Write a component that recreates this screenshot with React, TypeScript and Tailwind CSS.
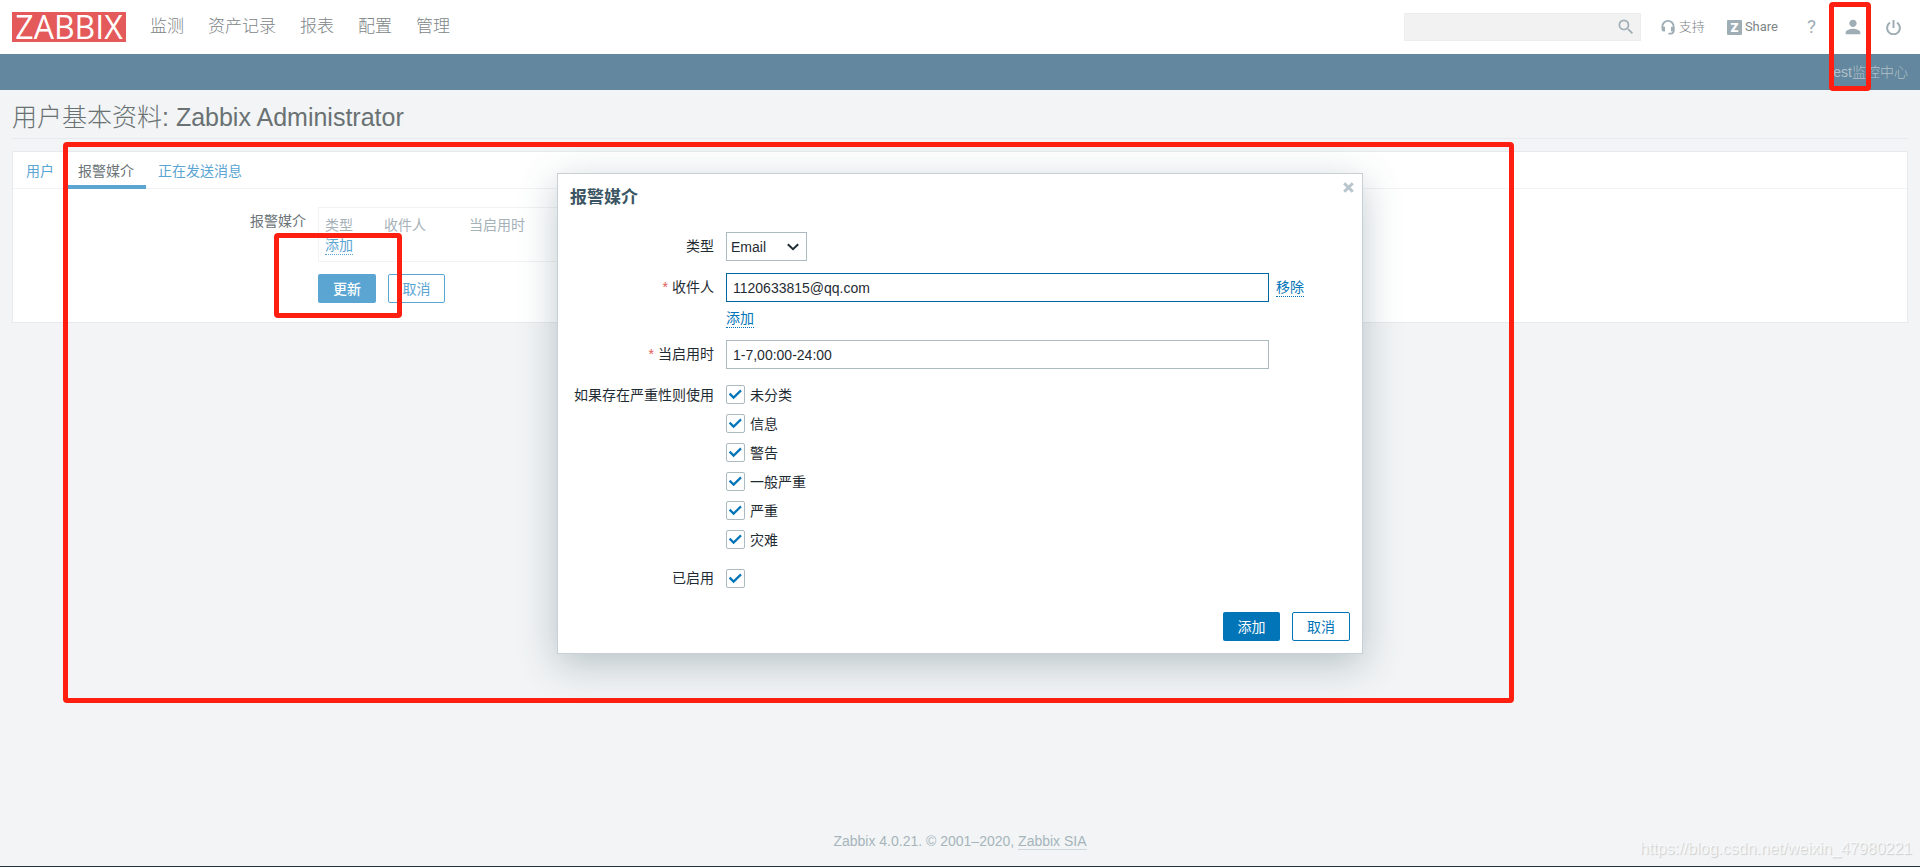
import { useState, type ReactNode } from "react";
import { MdPerson, MdSearch } from "react-icons/md";

const navItems = ["监测", "资产记录", "报表", "配置", "管理"];

const tabs = [
  { label: "用户", active: false },
  { label: "报警媒介", active: true },
  { label: "正在发送消息", active: false },
];

const severities = ["未分类", "信息", "警告", "一般严重", "严重", "灾难"];

function HeadsetIcon() {
  return (
    <svg viewBox="0 0 14 15" className="h-[15px] w-[14px]" fill="none" stroke="#9fadb5" strokeWidth="1.8">
      <path d="M1.4 7.6 V6.4 A5.6 5.5 0 0 1 12.6 6.4 V10.6 A2.6 2.6 0 0 1 10 13.6 H7.4" />
      <path d="M0.6 6.8 H4 V11.4 H2.6 A2 2 0 0 1 0.6 9.4 Z" fill="#9fadb5" stroke="none" />
      <path d="M13.4 6.8 H10 V11.4 H13.4 Z" fill="#9fadb5" stroke="none" />
    </svg>
  );
}

function PowerIcon() {
  return (
    <svg viewBox="0 0 15 15" className="h-[15px] w-[15px]" fill="none" stroke="currentColor" strokeWidth="2">
      <path d="M7.5 0 V8" />
      <path d="M4 2.6 A6.4 6.4 0 1 0 11 2.6" />
    </svg>
  );
}

function Checkbox({ id }: { id: string }) {
  return (
    <span className="grid h-[19px] w-[19px] shrink-0">
      <input
        id={id}
        type="checkbox"
        defaultChecked
        className="peer col-start-1 row-start-1 h-[19px] w-[19px] appearance-none rounded-[2px] border border-[#acbbc2] bg-white"
      />
      <svg
        viewBox="0 0 19 19"
        className="pointer-events-none invisible col-start-1 row-start-1 h-[19px] w-[19px] peer-checked:visible"
        fill="none"
        stroke="#0275b8"
        strokeWidth="2.2"
      >
        <path d="M3.6 8.6 L7.6 12.6 L15 5.4" />
      </svg>
    </span>
  );
}

type FieldRowProps = {
  label: string;
  htmlFor?: string;
  required?: boolean;
  children: ReactNode;
};

function FieldRow({ label, htmlFor, required, children }: FieldRowProps) {
  return (
    <div className="flex items-start gap-3">
      <label htmlFor={htmlFor} className="w-36 shrink-0 text-right leading-7 whitespace-nowrap">
        {required && <span className="mr-1 text-[#e45959]">*</span>}
        {label}
      </label>
      <div className="flex-1">{children}</div>
    </div>
  );
}

function Header() {
  return (
    <header>
      <div className="flex h-[54px] items-center bg-white pr-[19px] pl-3 text-[#7d8587]">
        <a
          href="#"
          className="flex h-[30px] w-[114px] items-center justify-center bg-[#e45959] font-['Open_Sans',sans-serif] text-[32px] leading-7 text-white"
        >
          ZABBIX
        </a>
        <nav className="ml-6 flex gap-6 text-[17px] font-light">
          {navItems.map((item) => (
            <a key={item} href="#">
              {item}
            </a>
          ))}
        </nav>
        <div className="ml-auto flex items-center font-['Roboto','Noto_Sans_CJK_SC',sans-serif] text-[13px] font-light">
          <form className="flex h-7 w-[237px] items-center border border-[#ededed] bg-[#f2f2f2] pr-1">
            <input type="text" aria-label="搜索" className="min-w-0 flex-1 bg-transparent px-2 outline-none" />
            <button type="button" aria-label="搜索" className="text-[#9fadb5]">
              <MdSearch size={20} />
            </button>
          </form>
          <a href="#" className="ml-5 flex items-center gap-1">
            <HeadsetIcon />
            支持
          </a>
          <a href="#" className="ml-[22px] flex items-center gap-[3px] font-normal">
            <span className="flex h-[15px] w-[15px] items-center justify-center rounded-[1px] bg-[#9fadb5] text-[13px] leading-none font-black text-white">
              Z
            </span>
            Share
          </a>
          <a href="#" className="ml-[29px] text-[19px] font-normal text-[#9fadb5]">
            ?
          </a>
          <a href="#" aria-label="用户" className="ml-[26px] text-[#9fadb5]">
            <MdPerson size={22} />
          </a>
          <a href="#" aria-label="退出" className="ml-[22px] text-[#9fadb5]">
            <PowerIcon />
          </a>
        </div>
      </div>
      <div className="flex h-9 items-center justify-end bg-[#62879e] px-3 font-light text-[#b3c1c9]">test监控中心</div>
    </header>
  );
}

function MediaPanel() {
  return (
    <main className="border border-[#e7eaec] bg-white">
      <div className="flex border-b border-[#f0f2f3] px-px">
        {tabs.map((tab) => (
          <a
            key={tab.label}
            href="#"
            className={
              tab.active
                ? "-mb-px border-b-4 border-[#5ba5d3] px-3 pt-[5px] leading-7 text-[#6a7377]"
                : "px-3 pt-[5px] leading-7 text-[#5ba5d3]"
            }
          >
            {tab.label}
          </a>
        ))}
      </div>
      <div className="flex gap-3 pt-[18px] pb-[19px]">
        <div className="w-[293px] shrink-0 pt-1 text-right text-[#6a7377]">报警媒介</div>
        <div>
          <div className="w-[560px] border border-[#f0f2f3] px-[6px] pt-[7px] pb-[6px]">
            <table className="text-left leading-5">
              <thead className="text-[#a6b2b9]">
                <tr>
                  <th className="w-[59px] font-normal">类型</th>
                  <th className="w-[85px] font-normal">收件人</th>
                  <th className="font-normal">当启用时</th>
                </tr>
              </thead>
              <tbody>
                <tr>
                  <td colSpan={3}>
                    <button type="button" className="border-b border-dotted border-[#5ba5d3] leading-[18px] text-[#5ba5d3]">
                      添加
                    </button>
                  </td>
                </tr>
              </tbody>
            </table>
          </div>
          <div className="mt-3 flex gap-3">
            <button type="button" className="h-[29px] w-[58px] rounded-[2px] bg-[#5ba5d3] font-medium text-white">
              更新
            </button>
            <button type="button" className="h-[29px] w-[57px] rounded-[2px] border border-[#5ba5d3] text-[#5ba5d3]">
              取消
            </button>
          </div>
        </div>
      </div>
    </main>
  );
}

function MediaDialog() {
  const [sendTo, setSendTo] = useState("1120633815@qq.com");
  const [period, setPeriod] = useState("1-7,00:00-24:00");

  return (
    <div
      role="dialog"
      aria-labelledby="dialog-title"
      className="absolute top-[173px] left-1/2 w-[806px] -translate-x-1/2 border border-[#c6d0d5] bg-white p-3 text-[#1f2c33] shadow-[0_10px_36px_rgba(62,90,104,0.32)]"
    >
      <button type="button" aria-label="关闭" className="absolute top-2 right-2 text-[#b9c5cc]">
        <svg viewBox="0 0 11 11" className="block h-[11px] w-[11px]" stroke="currentColor" strokeWidth="3">
          <path d="M1.2 1.2 L9.8 9.8 M9.8 1.2 L1.2 9.8" />
        </svg>
      </button>
      <h2 id="dialog-title" className="text-[17px] leading-6 font-bold text-[#3c5563]">
        报警媒介
      </h2>

      <form className="mt-[22px] flex flex-col gap-3">
        <FieldRow label="类型" htmlFor="type">
          <div className="grid w-[81px] items-center">
            <select
              id="type"
              className="col-start-1 row-start-1 h-[29px] appearance-none border border-[#acbbc2] bg-white px-1"
            >
              <option>Email</option>
            </select>
            <svg
              viewBox="0 0 12 8"
              className="pointer-events-none col-start-1 row-start-1 mr-2 h-2 w-3 justify-self-end"
              fill="none"
              stroke="#1f2c33"
              strokeWidth="2"
            >
              <path d="M0.8 1.2 L6 6.2 L11.2 1.2" />
            </svg>
          </div>
        </FieldRow>

        <FieldRow label="收件人" htmlFor="sendto" required>
          <div className="flex items-center gap-[7px]">
            <input
              id="sendto"
              type="text"
              value={sendTo}
              onChange={(e) => setSendTo(e.target.value)}
              className="h-[29px] w-[543px] border border-[#00659c] px-[6px] outline-none"
            />
            <button type="button" className="border-b border-dotted border-[#0275b8] leading-[18px] text-[#0275b8]">
              移除
            </button>
          </div>
          <button type="button" className="mt-[7px] block border-b border-dotted border-[#0275b8] leading-[18px] text-[#0275b8]">
            添加
          </button>
        </FieldRow>

        <FieldRow label="当启用时" htmlFor="period" required>
          <input
            id="period"
            type="text"
            value={period}
            onChange={(e) => setPeriod(e.target.value)}
            className="block h-[29px] w-[543px] border border-[#acbbc2] px-[6px] outline-none"
          />
        </FieldRow>

        <FieldRow label="如果存在严重性则使用">
          <ul className="flex flex-col gap-[10px] pt-1">
            {severities.map((name, i) => (
              <li key={name} className="flex h-[19px] items-center gap-[5px]">
                <Checkbox id={`severity-${i}`} />
                <label htmlFor={`severity-${i}`}>{name}</label>
              </li>
            ))}
          </ul>
        </FieldRow>

        <div className="pt-[3px]">
          <FieldRow label="已启用" htmlFor="enabled">
            <div className="pt-[5px]">
              <Checkbox id="enabled" />
            </div>
          </FieldRow>
        </div>
      </form>

      <div className="mt-5 flex justify-end gap-3">
        <button type="button" className="h-[29px] w-[57px] rounded-[2px] bg-[#0275b8] text-white">
          添加
        </button>
        <button type="button" className="h-[29px] w-[58px] rounded-[2px] border border-[#0275b8] text-[#0275b8]">
          取消
        </button>
      </div>
    </div>
  );
}

// Red frames that point the reader at the steps
function Highlights() {
  return (
    <div className="pointer-events-none">
      <div className="absolute top-[2px] right-[49px] h-[89px] w-[42px] rounded-[4px] border-[5px] border-[#ff1f10]" />
      <div className="absolute top-[142px] left-[63px] h-[561px] w-[1451px] rounded-[4px] border-[5px] border-[#ff1f10]" />
      <div className="absolute top-[233px] left-[274px] h-[85px] w-[128px] rounded-[4px] border-[5px] border-[#ff1f10]" />
    </div>
  );
}

export default function App() {
  return (
    <div className="relative flex min-h-screen flex-col bg-[#f2f4f5] font-['Liberation_Sans','Noto_Sans_CJK_SC',sans-serif] text-[14px] leading-5">
      <Header />
      <div className="px-3">
        <h1 className="mb-3 border-b border-[#e7eaec] pt-[9px] pb-[3px] text-[25px] leading-9 font-light text-[#697173]">
          用户基本资料: Zabbix Administrator
        </h1>
        <MediaPanel />
      </div>

      <footer className="mt-auto border-b border-[#24313d] pb-[15px] text-center text-[#a6b4bc]">
        Zabbix 4.0.21. © 2001–2020,{" "}
        <a href="#" className="border-b border-[#d0d8dc]">
          Zabbix SIA
        </a>
      </footer>

      <MediaDialog />
      <Highlights />
      <div className="pointer-events-none absolute right-2 bottom-2 text-[16px] text-white/70 [text-shadow:1px_1px_1px_rgba(0,0,0,0.16)]">
        https://blog.csdn.net/weixin_47980221
      </div>
    </div>
  );
}
